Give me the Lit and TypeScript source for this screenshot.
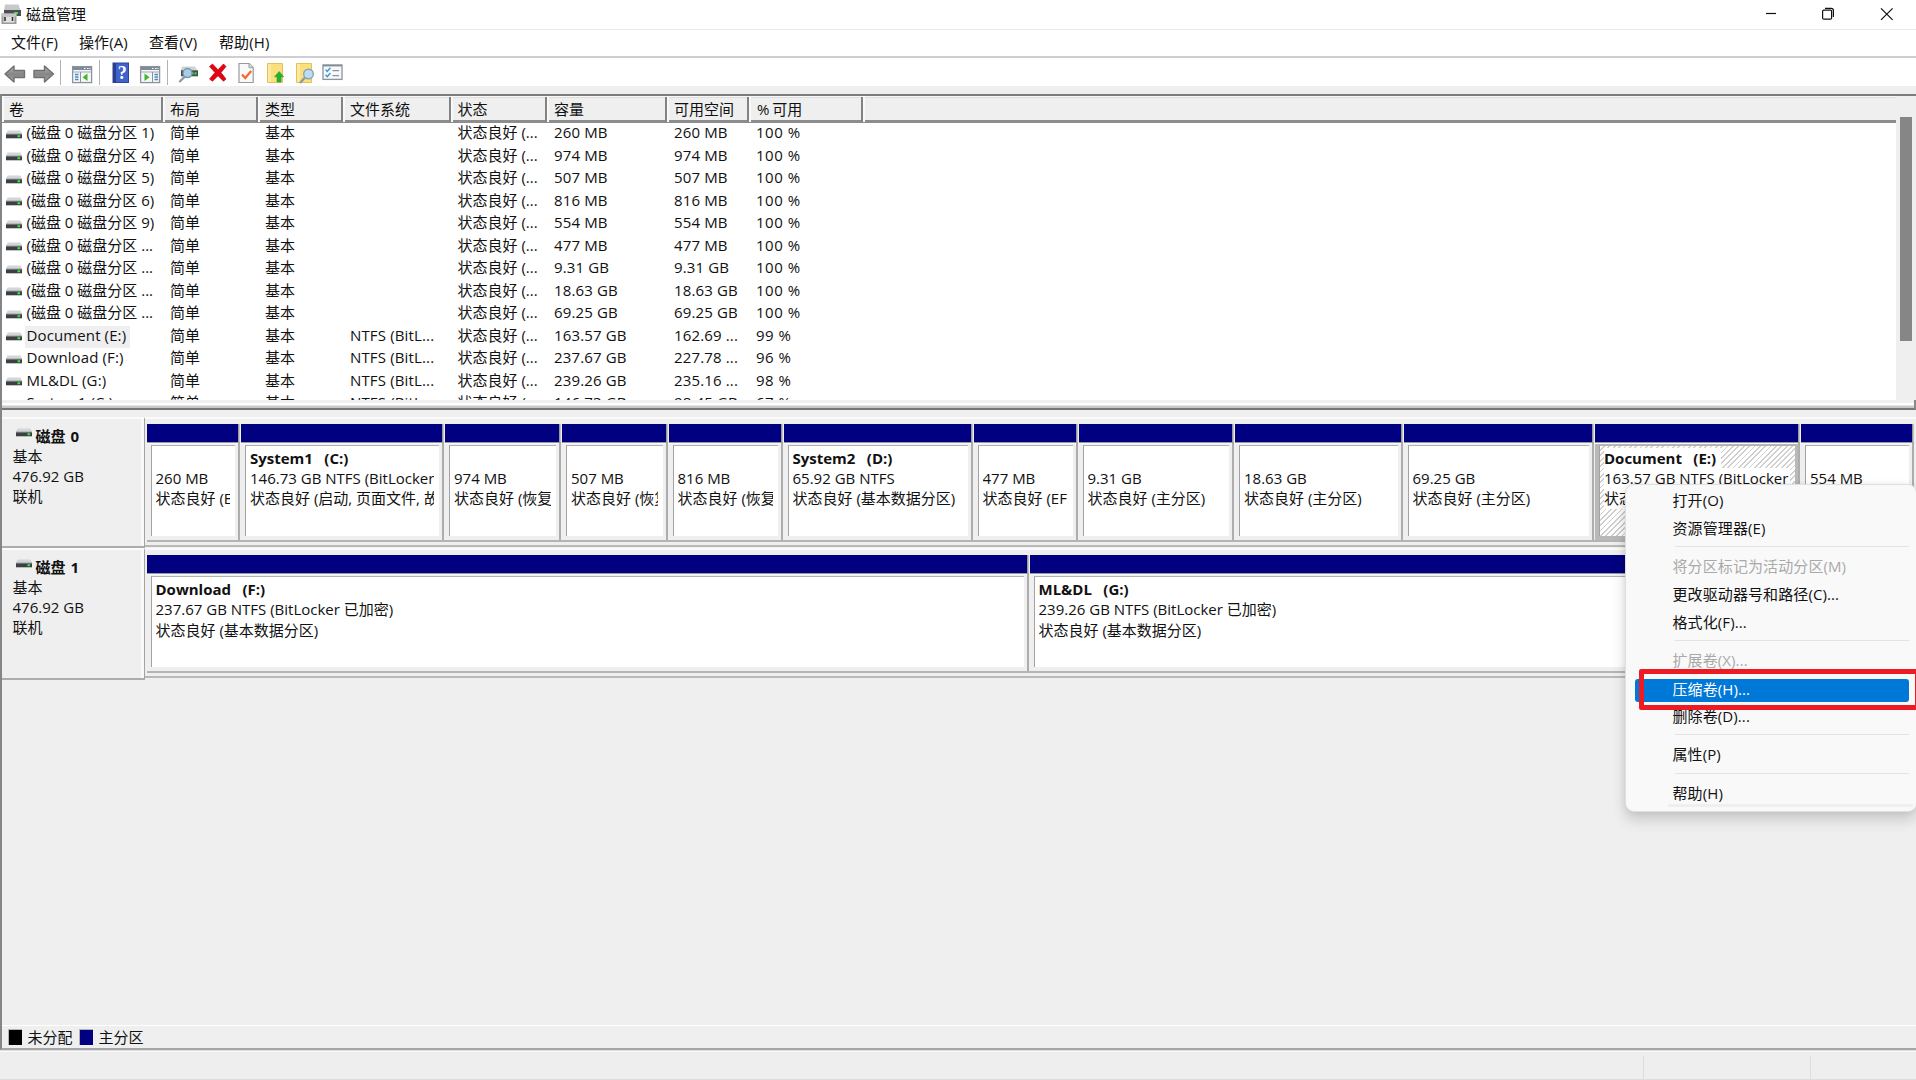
import { LitElement, html, css, svg, nothing } from "lit";
import { customElement } from "lit/decorators.js";

interface Volume {
  name: string;
  fs: string;
  size: string;
  free: string;
  pct: string;
  selected?: boolean;
}

interface Partition {
  width: number;
  name: string;
  size: string;
  status: string;
  selected?: boolean;
}

const part = (n: string) => `(磁盘 0 磁盘分区 ${n}`;

const volumes: Volume[] = [
  { name: part("1)"), fs: "", size: "260 MB", free: "260 MB", pct: "100 %" },
  { name: part("4)"), fs: "", size: "974 MB", free: "974 MB", pct: "100 %" },
  { name: part("5)"), fs: "", size: "507 MB", free: "507 MB", pct: "100 %" },
  { name: part("6)"), fs: "", size: "816 MB", free: "816 MB", pct: "100 %" },
  { name: part("9)"), fs: "", size: "554 MB", free: "554 MB", pct: "100 %" },
  { name: part("..."), fs: "", size: "477 MB", free: "477 MB", pct: "100 %" },
  { name: part("..."), fs: "", size: "9.31 GB", free: "9.31 GB", pct: "100 %" },
  { name: part("..."), fs: "", size: "18.63 GB", free: "18.63 GB", pct: "100 %" },
  { name: part("..."), fs: "", size: "69.25 GB", free: "69.25 GB", pct: "100 %" },
  { name: "Document (E:)", fs: "NTFS (BitL...", size: "163.57 GB", free: "162.69 ...", pct: "99 %", selected: true },
  { name: "Download (F:)", fs: "NTFS (BitL...", size: "237.67 GB", free: "227.78 ...", pct: "96 %" },
  { name: "ML&DL (G:)", fs: "NTFS (BitL...", size: "239.26 GB", free: "235.16 ...", pct: "98 %" },
  { name: "System1 (C:)", fs: "NTFS (BitL...", size: "146.73 GB", free: "98.45 GB", pct: "67 %" },
];

const columns = ["卷", "布局", "类型", "文件系统", "状态", "容量", "可用空间", "% 可用"];

const disks: { name: string; parts: Partition[] }[] = [
  {
    name: "磁盘 0",
    parts: [
      { width: 94.5, name: "", size: "260 MB", status: "状态良好 (EFI 系统分区)" },
      { width: 204, name: "System1  (C:)", size: "146.73 GB NTFS (BitLocker 已加密)", status: "状态良好 (启动, 页面文件, 故障转储, 基本数据分区)" },
      { width: 117, name: "", size: "974 MB", status: "状态良好 (恢复分区)" },
      { width: 106.5, name: "", size: "507 MB", status: "状态良好 (恢复分区)" },
      { width: 115, name: "", size: "816 MB", status: "状态良好 (恢复分区)" },
      { width: 190, name: "System2  (D:)", size: "65.92 GB NTFS", status: "状态良好 (基本数据分区)" },
      { width: 105, name: "", size: "477 MB", status: "状态良好 (EFI 系统分区)" },
      { width: 156.5, name: "", size: "9.31 GB", status: "状态良好 (主分区)" },
      { width: 168.5, name: "", size: "18.63 GB", status: "状态良好 (主分区)" },
      { width: 191.5, name: "", size: "69.25 GB", status: "状态良好 (主分区)" },
      { width: 206, name: "Document  (E:)", size: "163.57 GB NTFS (BitLocker 已加密)", status: "状态良好 (基本数据分区)", selected: true },
      { width: 113.5, name: "", size: "554 MB", status: "状态良好 (恢复分区)" },
    ],
  },
  {
    name: "磁盘 1",
    parts: [
      { width: 883, name: "Download  (F:)", size: "237.67 GB NTFS (BitLocker 已加密)", status: "状态良好 (基本数据分区)" },
      { width: 885, name: "ML&DL  (G:)", size: "239.26 GB NTFS (BitLocker 已加密)", status: "状态良好 (基本数据分区)" },
    ],
  },
];

const driveIcon = html`<svg class="drive" width="18" height="9" viewBox="0 0 18 9">
  <path d="M2.500 0.500h13l1.500 3.500H1z" fill="#d3d6d9" />
  <rect x="1" y="4" width="16" height="4.3" fill="#3d4043" />
  <rect x="1" y="3.5" width="16" height="1" fill="#9b9fa3" />
  <rect x="12.5" y="5.200" width="2.600" height="2" fill="#39e63f" />
</svg>`;

const arrow = svg`<path d="M5 14 L14 6 V10.5 H24.5 V17.5 H14 V22 Z" fill="url(#g)" stroke="#707070" stroke-width="1.4" stroke-linejoin="round"/>
  <defs><linearGradient id="g" x1="0" y1="0" x2="0" y2="1"><stop offset="0" stop-color="#b4b4b4"/><stop offset=".5" stop-color="#868686"/><stop offset="1" stop-color="#a3a3a3"/></linearGradient></defs>`;

const pane = svg`<rect x="4.6" y="6.6" width="19" height="16" fill="#f4f6f8" stroke="#8b949c" stroke-width="1.3"/>
  <rect x="5" y="7" width="18.4" height="3" fill="#7e8b98"/>
  <path d="M16 8.5h1.5M19 8.5h1.5M21.5 8.5h1" stroke="#fff"/>
  <path d="M5 12h18.5" stroke="#a2abb3"/>`;

const note = svg`<path d="M5.500 3.500h15v19H5.500z" fill="#fadf7d" stroke="#e3c25c"/><path d="M6 4h3v18h-3z" fill="#fbe99f"/>`;

const icons = {
  back: arrow,
  forward: svg`<g transform="translate(29.5 0) scale(-1 1)">${arrow}</g>`,
  tree: svg`${pane}<path d="M12.5 12v10.5" stroke="#8b949c"/><path d="M7 14.5h3.5M7 17h3.5M7 19.5h3.5" stroke="#4a8ac4" stroke-width="1.3"/><path d="M19.5 13.5v7.5l-5-3.7z" fill="#45b52c"/>`,
  help: svg`<rect x="6" y="3" width="15.5" height="19.5" fill="#3f63cb" stroke="#2d469d"/><path d="M6 3h3v19.5H6z" fill="#2a3f8d"/><text x="15.2" y="19" text-anchor="middle" font-family="Liberation Serif" font-size="18" font-weight="bold" fill="#fff">?</text>`,
  action: svg`${pane}<path d="M16.5 12v10.5" stroke="#8b949c"/><path d="M18.5 14.5H22M18.5 17H22M18.5 19.5H22" stroke="#4a8ac4" stroke-width="1.3"/><path d="M8.5 13.5v7.5l5-3.7z" fill="#45b52c"/>`,
  connect: svg`<path d="M7 6.5h13l2.5 4h-17z" fill="#cfd4d8"/><rect x="6" y="10.3" width="17" height="6" fill="#484d51"/><path d="M16.5 13.3h2M19.5 13.3h2" stroke="#43dd46" stroke-width="2.2"/><path d="M10 16.5 L4.3 22" stroke="#8b98a5" stroke-width="2.3"/><circle cx="12.5" cy="13" r="4.5" fill="#a6cdea" stroke="#7d95a8" stroke-width="1.3"/>`,
  remove: svg`<path d="M5.5 6.5 8.5 4 14 9.8 19.5 4 22 6.5 17 12.6 22 19 19.5 21.2 14 15.7 8.5 21.2 5.5 19 11 12.6z" fill="#e00613" stroke="#c40410" stroke-width=".7"/>`,
  verify: svg`<path d="M6 3.5h10.2l4 4V22.5H6z" fill="#f9f9fa" stroke="#9b9b9b" stroke-width="1.2"/><path d="M16 3.5v4.2h4.2" fill="#ddd" stroke="#9b9b9b"/><path d="M9 14.5l3.2 3.5 6-7" stroke="#f06a35" stroke-width="2.2" fill="none"/>`,
  up: svg`${note}<path d="M17.200 11.500l4.500 5.300h-2.600V22h-4.100v-5.200h-2.500z" fill="#25b32c" stroke="#1d9625" stroke-width=".5"/>`,
  search: svg`${note}<path d="M14 17.5L9 23" stroke="#8c99a5" stroke-width="2.3"/><circle cx="17.5" cy="14" r="4.8" fill="#bddcf0" stroke="#8ba3b4" stroke-width="1.4"/>`,
  list: svg`<rect x="3" y="5" width="19" height="14.4" fill="#f7f9fb" stroke="#8b949c" stroke-width="1.3"/><path d="M3 5.6h19" stroke="#7e8b98" stroke-width="1.6"/><path d="M5.6 9.6l1.6 1.8 3.2-3.6M5.6 14.8l1.6 1.8 3.2-3.6" stroke="#3c93d8" stroke-width="1.4" fill="none"/><path d="M12.5 10.6H19M12.5 15.6H19" stroke="#8b949c" stroke-width="1.3"/>`,
};

const button = (g: unknown) => html`<svg class="tool" width="29" height="26" viewBox="0 0 29 26">${g}</svg>`;
const sep = html`<span class="tool-sep"></span>`;

@customElement("app-root")
export class AppRoot extends LitElement {
  static styles = css`
    :host {
      display: block;
      position: relative;
      width: 1916px;
      height: 1080px;
      overflow: hidden;
      background: #efefef;
      color: #111;
      font: 15px/20px "Open Sans", "Noto Sans CJK SC", sans-serif;
      white-space: nowrap;
    }
    * { box-sizing: border-box; }
    .window { display: flex; flex-direction: column; height: 1080px; }
    .title { display: flex; align-items: center; height: 30px; background: #fff; border-bottom: 1px solid #ebebeb; }
    .title svg { display: block; margin-bottom: 1px; }
    .title-text { flex: 1; margin-left: 5px; padding-bottom: 2px; }
    .menu { display: flex; height: 28px; padding: 2px 0 0 11px; background: #fff; border-bottom: 2px solid #cfcfd1; line-height: 21px; letter-spacing: 0.1px; }
    .menu span { width: 68px; }
    .menu span:nth-child(n + 2) { width: 70px; }
    .tools { display: flex; height: 28px; padding: 2px 0 0; background: #fff; align-items: flex-start; }
    .tool { display: block; }
    .tool-sep { width: 1px; height: 25px; margin: 0 7px 0 2px; background: #b2b2b2; }
    .frame { flex: none; margin-top: 8px; height: 956px; border-left: 2px solid #858585; border-top: 2px solid #7c7c7c; border-bottom: 2px solid #a5a5a5; display: flex; flex-direction: column; }
    .list { display: flex; height: 304px; background: #fff; }
    .table { flex: 1; }
    .head, .row { display: grid; grid-template-columns: 161px 95px 85px 107.5px 96.5px 120px 82px 114px 1fr; }
    .head { height: 27px; background: #efefef; border-bottom: 3px solid #8d8d8d; border-top: 1px solid #f8f8f8; line-height: 25px; }
    .head span { border-right: 2px solid #838383; border-left: 2px solid #f9f9f9; padding-left: 5px; box-shadow: inset 0 1px #dedede; }
    .head span:last-child { border-right: 0; }
    .head span:nth-child(8) { word-spacing: -1px; padding-left: 6px; }
    .rows { height: 277px; overflow: hidden; }
    .row { height: 22.5px; line-height: 19px; }
    .row span { padding-left: 7px; overflow: hidden; }
    .row .vol { display: flex; padding-left: 3px; align-items: center; height: 22px; }
    .row .vol b { font-weight: normal; margin-left: 1.5px; padding: 0 4px 0 2px; height: 22px; line-height: 19px; }
    .row .vol b.latin { letter-spacing: 0.12px; }
    .row .vol b.on { background: #efefef; }
    .row .fs { letter-spacing: 0.15px; }
    .row .num { letter-spacing: 0.15px; }
    .row .pct { letter-spacing: 0.5px; }
    .scroll { width: 20px; background: #efefef; padding: 21px 0 0 4px; }
    .thumb { width: 12px; height: 224px; background: #868686; }
    .split { height: 10px; border-bottom: 2px solid #777; background: linear-gradient(#f0f0f0 0 3px, #fff 3px 5px, #e6e6e6 5px 6px, #c9c9c9 6px 8px); border-right: 2px solid #888; }
    .graph { flex: 1; display: flex; flex-direction: column; padding-top: 7px; }
    .disk { display: flex; height: 131.3px; }
    .label { width: 143px; border-top: 2px solid #fbfbfb; border-bottom: 2px solid #acacac; border-right: 1.5px solid #a3a3a3; box-shadow: inset -3px 0 #f9f9f9; padding: 7px 0 0 10.5px; line-height: 20px; }
    .label .name { display: flex; font-weight: bold; word-spacing: 1px; }
    .label .drive { margin: 2px 2.5px 0 2.5px; }
    .body { flex: 1; height: 130px; border-top: 2px solid #fbfbfb; border-bottom: 2px solid #b9b9b9; display: flex; padding: 5px 0 4px 1.5px; overflow: hidden; }
    .part { flex: none; height: 118px; display: flex; flex-direction: column; border-bottom: 2px solid #b4b4b4; }
    .bar { height: 18px; background: #000080; margin-right: 3px; box-shadow: 1.5px 0 #999; flex: none; }
    .cell { flex: 1; border-top: 1.5px solid #999; border-right: 2px solid #adadad; margin-right: 1px; padding: 2px 3px 4px 4px; box-shadow: inset 0 1px #f7f7f7; display: flex; }
    .box { flex: 1; min-width: 0; background: #fff; border-top: 1.5px solid #b0b0b0; border-left: 1.5px solid #a2a2a2; padding: 2px 5px 0 4px; }
    .clip { overflow: hidden; line-height: 20.2px; }
    .clip div { height: 20.2px; }
    .clip .pname { font-weight: bold; white-space: pre; word-spacing: 1.8px; }
    .on .cell { background: #b9b9b9; }
    .on .box { background: repeating-linear-gradient(135deg, #fff 0 2.5px, #cfcfcf 2.5px 3.8px); }
    .on .clip div { width: fit-content; background: #fff; }
    .on .clip .pname { padding-right: 5px; }
    .legend { display: flex; align-items: center; height: 23px; border-top: 1px solid #fff; padding-left: 6px; margin-top: auto; }
    .swatch { width: 14px; height: 16px; border: 1px solid #b4b4b4; border-right: 0; border-bottom: 0; margin-right: 5.5px; }
    .black { background: #000; }
    .blue { background: #000080; }
    .legend span { margin-right: 6.5px; }
    .status { flex: 1; display: grid; grid-template-columns: 1644px 167px 1fr; border-bottom: 1px solid #dcdcdc; padding-top: 5px; border-top: 1px solid #e0e0e0; box-shadow: inset 0 1px #f8f8f8; background: #eee; }
    .status i { border-right: 1px solid #ddd; }
    .context { position: absolute; left: 1625px; top: 484px; width: 292px; height: 328px; background: #f9f9f9; border: 1px solid #dfdfdf; border-radius: 9px; padding: 3px 0 0; box-shadow: 0 8px 14px rgba(0, 0, 0, 0.16), 0 0 6px rgba(0, 0, 0, 0.07); }
    .item { height: 27.7px; line-height: 25.5px; padding-left: 46.5px; letter-spacing: 0.1px; }
    .item.off { color: #a9a9a9; }
    .item.hot { background: #0078d7; color: #fff; margin: 2.5px 7px 2px 9px; height: 23px; line-height: 21.5px; padding-left: 37.5px; border-radius: 3px; }
    .rule { height: 1px; background: #e4e4e4; margin: 2.8px 7px 7.2px 49px; }
    .strip { height: 3px; background: #efefef; margin: -5px 3px 0 42px; }
    .mark { position: absolute; left: 1639px; top: 669px; width: 281px; height: 41px; border: 5px solid #ed1c24; border-radius: 2px; }
  `;

  private renderItem(text: string, cls = "") {
    return html`<div class="item ${cls}">${text}</div>`;
  }

  private renderDisk(d: (typeof disks)[number]) {
    return html`<div class="disk">
      <div class="label"><div class="name">${driveIcon}<span>${d.name}</span></div><div>基本</div><div>476.92 GB</div><div>联机</div></div>
      <div class="body">${d.parts.map(
        (p) => html`<div class="part ${p.selected ? "on" : ""}" style="width:${p.width}px"><div class="bar"></div><div class="cell"><div class="box"><div class="clip"><div class="pname">${p.name}</div><div>${p.size}</div><div>${p.status}</div></div></div></div></div>`
      )}</div>
    </div>`;
  }

  render() {
    return html`<div class="window">
      <div class="title"><svg width="21" height="24" viewBox="0 0 21 24"><path d="M5 2.500h13.500l2 6H4z" fill="#c6c8ca"/><rect x="4" y="8" width="17" height="6" fill="#4c4f51"/><rect x="14" y="10" width="4" height="2" fill="#3fe246"/><rect x="1.5" y="11.5" width="15" height="10.5" fill="#9b9b9b"/><path d="M1.5 11.5h15v3h-15z" fill="#c5c5c5"/><rect x="3.5" y="14.5" width="11" height="6" fill="#e1e1e1"/><path d="M5 15v4M12.5 15v4" stroke="#333" stroke-width="1.6"/></svg><span class="title-text">磁盘管理</span><svg width="150" height="28" viewBox="0 0 150 28" fill="none" stroke="#111" stroke-width="1.2"><path d="M-2 13.500h12"/><rect x="56.6" y="10.1" width="9" height="9" rx="1.2"/><path d="M59 8.400h6.200a2.200 2.200 0 0 1 2.200 2.200v6.400" /><path d="M115 8.300l11.600 11.600M126.600 8.300l-11.600 11.600"/></svg></div>
      <div class="menu"><span>文件(F)</span><span>操作(A)</span><span>查看(V)</span><span>帮助(H)</span></div>
      <div class="tools">${button(icons.back)}${button(icons.forward)}${sep}${button(icons.tree)}${sep}${button(icons.help)}${button(icons.action)}${sep}${button(icons.connect)}${button(icons.remove)}${button(icons.verify)}${button(icons.up)}${button(icons.search)}${button(icons.list)}</div>
      <div class="frame">
        <div class="list">
          <div class="table">
            <div class="head">${columns.map((c) => html`<span>${c}</span>`)}<span></span></div>
            <div class="rows">${volumes.map(
              (v) => html`<div class="row"><span class="vol">${driveIcon}<b class="${v.fs ? "latin" : ""} ${v.selected ? "on" : ""}">${v.name}</b></span><span>简单</span><span>基本</span><span class="fs">${v.fs || nothing}</span><span>状态良好 (...</span><span class="num">${v.size}</span><span class="num">${v.free}</span><span class="pct">${v.pct}</span></div>`
            )}</div>
          </div>
          <div class="scroll"><div class="thumb"></div></div>
        </div>
        <div class="split"></div>
        <div class="graph">${disks.map((d) => this.renderDisk(d))}
          <div class="legend"><i class="swatch black"></i><span>未分配</span><i class="swatch blue"></i><span>主分区</span></div>
        </div>
      </div>
      <div class="status"><i></i><i></i></div>
    </div>
    <div class="context">${this.renderItem("打开(O)")}${this.renderItem("资源管理器(E)")}<div class="rule"></div>${this.renderItem("将分区标记为活动分区(M)", "off")}${this.renderItem("更改驱动器号和路径(C)...")}${this.renderItem("格式化(F)...")}<div class="rule"></div>${this.renderItem("扩展卷(X)...", "off")}${this.renderItem("压缩卷(H)...", "hot")}${this.renderItem("删除卷(D)...")}<div class="rule"></div>${this.renderItem("属性(P)")}<div class="rule"></div>${this.renderItem("帮助(H)")}<div class="strip"></div></div>
    <div class="mark"></div>`;
  }
}
